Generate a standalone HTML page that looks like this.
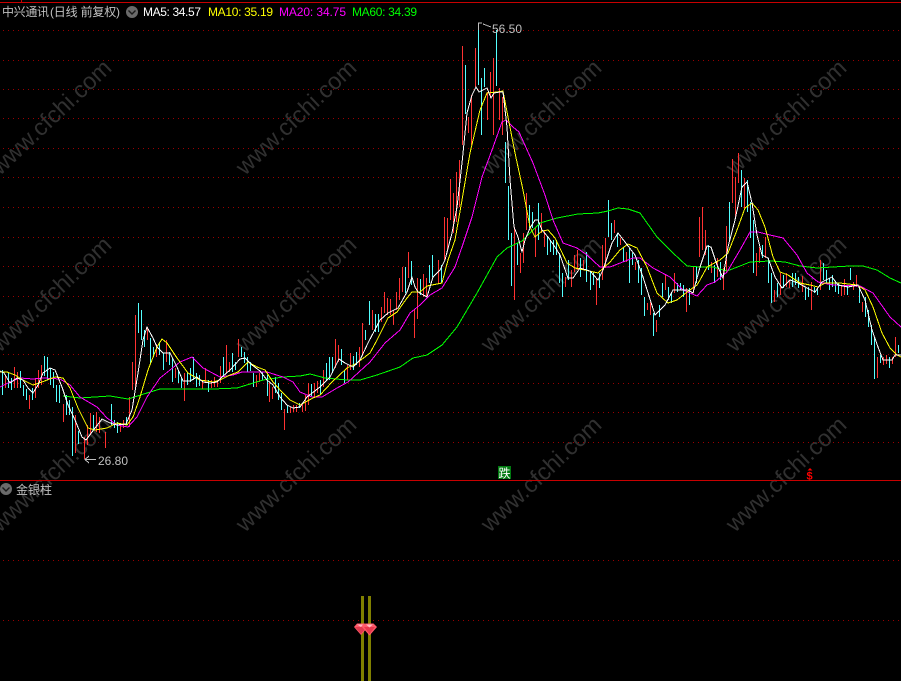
<!DOCTYPE html>
<html lang="zh">
<head>
<meta charset="utf-8">
<title>中兴通讯 日线</title>
<style>
html,body{margin:0;padding:0;background:#000;width:901px;height:681px;overflow:hidden}
svg{display:block}
.wm{font:23.5px "Liberation Sans",sans-serif;fill:#303030;text-anchor:middle}
.t{font-family:"Liberation Sans","WenQuanYi Zen Hei","Noto Sans CJK SC",sans-serif;font-size:12px}
</style>
</head>
<body>
<svg width="901" height="681" viewBox="0 0 901 681" xmlns="http://www.w3.org/2000/svg">
<rect width="901" height="681" fill="#000"/>
<g class="wm">
<text x="51" y="125" transform="rotate(-43.3 51 117)">www.cfchi.com</text>
<text x="296" y="125" transform="rotate(-43.3 296 117)">www.cfchi.com</text>
<text x="541" y="125" transform="rotate(-43.3 541 117)">www.cfchi.com</text>
<text x="786" y="125" transform="rotate(-43.3 786 117)">www.cfchi.com</text>
<text x="51" y="302" transform="rotate(-43.3 51 294)">www.cfchi.com</text>
<text x="296" y="302" transform="rotate(-43.3 296 294)">www.cfchi.com</text>
<text x="541" y="302" transform="rotate(-43.3 541 294)">www.cfchi.com</text>
<text x="786" y="302" transform="rotate(-43.3 786 294)">www.cfchi.com</text>
<text x="51" y="482" transform="rotate(-43.3 51 474)">www.cfchi.com</text>
<text x="296" y="482" transform="rotate(-43.3 296 474)">www.cfchi.com</text>
<text x="541" y="482" transform="rotate(-43.3 541 474)">www.cfchi.com</text>
<text x="786" y="482" transform="rotate(-43.3 786 474)">www.cfchi.com</text>
</g>
<g stroke="#9a0000" stroke-width="1" stroke-dasharray="1 4" shape-rendering="crispEdges">
<path d="M3 30.5H901M3 60.5H901M3 89.5H901M3 118.5H901M3 148.5H901M3 177.5H901M3 207.5H901M3 237.5H901M3 266.5H901M3 296.5H901M3 324.5H901M3 354.5H901M3 383.5H901M3 412.5H901M3 442.5H901M3 560.5H901M3 620.5H901"/>
</g>
<g fill="#c80000" shape-rendering="crispEdges">
<rect x="0" y="2" width="901" height="1"/>
<rect x="21" y="0" width="1" height="2"/>
<rect x="0" y="480" width="901" height="1"/>
</g>
<g fill="none" stroke-width="1" shape-rendering="crispEdges" transform="translate(.5 0)">
<path stroke="#ff3232" d="M5 375V388M14 367V388M17 372V388M29 395V409M35 378V398M38 370V388M41 365V385M63 404V422M75 415V453M84 437V459M87 425V445M90 413V435M96 412V432M99 417V433M105 432V448M120 423V432M123 420V428M129 397V427M132 362V390M135 315V387M147 327V340M156 344V357M166 340V362M175 368V378M184 373V401M202 382V389M205 368V383M211 380V388M214 377V387M217 380V387M220 366V383M226 345V373M229 362V372M238 339V357M256 375V387M259 373V382M269 383V402M272 387V399M284 409V430M290 407V413M293 405V412M296 405V412M302 403V412M305 395V411M308 383V405M314 383V397M317 381V393M323 370V387M335 339V368M338 345V362M347 365V380M350 353V370M359 347V367M362 323V355M372 310V330M381 307V322M384 292V313M387 298V315M390 299V315M393 310V325M396 292V310M399 278V300M402 267V292M408 252V278M414 309V338M417 278V319M423 274V297M426 278V297M438 260V283M444 217V260M447 218V250M450 179V220M453 193V233M456 172V222M459 160V207M462 46V145M468 117V133M471 95V145M475 48V87M487 92V120M490 72V98M493 58V135M499 88V120M502 97V135M514 227V300M520 253V273M523 233V263M526 193V230M535 227V257M541 213V233M544 230V247M565 277V287M571 270V287M574 255V272M577 250V270M583 260V270M596 278V305M602 245V280M605 238V268M614 220V233M620 238V245M626 252V262M635 262V270M647 303V310M650 302V315M656 320V332M665 274V290M674 273V293M686 288V312M693 267V293M699 217V257M702 207V250M705 230V255M711 262V273M717 258V277M723 268V290M726 226V273M732 159V203M735 177V217M738 153V183M744 178V208M756 253V276M759 247V263M765 237V258M774 290V302M780 273V295M786 273V287M789 280V288M802 276V292M811 282V310M820 260V290M841 285V296M844 279V295M853 282V290M856 275V287M862 302V312M877 357V378M883 357V365M886 355V364M892 357V364M895 337V357"/>
<path stroke="#54ffff" d="M2 370V395M8 372V388M11 378V390M20 371V388M23 385V396M26 389V400M32 388V400M44 356V376M47 357V380M50 368V385M53 372V388M56 385V402M59 385V403M66 395V415M69 400V415M72 407V456M78 431V444M93 415V430M111 404V425M114 420V428M117 422V433M126 417V425M138 303V333M141 310V340M144 330V347M150 338V363M153 347V357M159 342V355M163 353V370M169 352V365M172 358V382M178 370V383M181 377V388M187 373V385M190 368V382M193 357V380M196 373V387M199 375V386M208 380V392M223 357V377M232 353V372M235 362V370M241 347V357M244 352V363M247 357V372M250 362V371M253 373V387M262 372V380M267 375V396M275 377V393M278 383V400M281 393V410M287 405V413M299 403V408M311 384V396M320 380V395M326 363V380M329 357V380M332 357V373M341 349V365M344 370V383M353 356V370M356 352V365M365 330V340M369 301V325M375 314V332M378 314V332M405 267V293M411 261V285M420 279V295M429 265V283M432 255V277M441 265V283M465 65V114M478 23V85M481 78V135M484 68V87M496 30V86M505 142V183M508 186V240M511 233V286M517 243V265M529 205V228M532 212V228M538 203V240M547 237V255M550 240V252M553 240V255M556 240V255M559 253V283M562 273V297M568 260V280M580 258V277M586 252V282M590 272V290M593 272V285M599 273V288M608 200V237M611 223V240M617 233V247M623 248V262M629 248V283M632 253V265M638 260V283M641 268V295M644 297V316M653 313V336M659 305V317M662 283V297M668 287V300M671 292V303M677 283V292M680 283V290M683 285V297M689 288V305M696 267V283M708 245V270M714 265V283M720 262V280M729 202V240M741 170V207M747 180V212M750 202V238M753 220V273M762 245V258M768 258V283M771 273V303M777 283V297M783 275V288M792 273V287M795 273V285M798 277V288M805 288V300M808 287V297M814 287V293M817 288V295M823 263V280M826 270V283M829 278V290M832 275V287M835 282V292M838 283V294M847 285V295M850 268V280M859 287V303M865 297V317M868 310V327M871 325V345M874 337V379M880 355V363M889 357V368M898 345V353"/>
</g>
<g fill="none" stroke-width="1" stroke-linejoin="round" shape-rendering="crispEdges">
<path stroke="#00ff00" d="M63 396L80 398L110 396L128 399L147 393L160 389L213 389L237 388L263 380L283 377L300 376L310 374L325 378L347 380L360 380L377 375L400 367L413 358L427 355L442 345L457 327L477 293L497 257L507 248L522 241L540 223L557 218L578 214L598 213L608 211L618 208L628 209L640 213L657 237L673 253L687 266L700 267L713 267L727 271L740 266L750 262L770 261L785 262L800 266L817 268L833 267L850 266L863 266L877 270L890 278L901 283"/>
<path stroke="#ff00ff" d="M0 387L10 382L20 378L33 379L43 378L60 379L70 385L80 397L97 407L107 418L117 425L128 427L137 417L147 397L160 378L180 362L192 357L203 368L220 377L233 375L242 372L257 372L267 372L283 377L293 382L300 392L312 397L322 397L337 388L348 382L370 362L385 343L400 330L410 313L420 305L430 295L442 288L455 267L462 247L472 217L482 177L492 150L502 122L506 120L513 127L519 132L533 163L545 195L553 220L563 243L577 248L587 255L600 267L610 267L633 258L640 258L653 268L670 277L683 290L697 296L707 285L715 282L727 272L740 250L750 232L758 232L770 235L783 238L797 255L807 273L818 282L833 285L860 286L873 293L890 317L901 327"/>
<path stroke="#ffff00" d="M0 372L7 372L15 375L23 380L33 385L42 382L55 377L63 378L70 388L78 408L88 428L95 430L107 428L117 423L127 425L133 417L140 397L148 370L157 347L162 339L167 343L177 358L188 373L200 380L213 382L220 380L230 375L238 372L248 362L257 367L265 370L273 382L282 392L290 400L300 405L313 398L320 395L332 382L347 368L357 363L370 353L377 340L388 318L397 312L407 298L412 292L420 292L427 286L442 283L448 260L455 240L462 200L470 153L480 110L487 93L497 92L503 91L508 117L515 153L523 190L530 227L535 237L542 231L548 230L555 238L567 263L575 268L585 270L598 273L610 262L620 250L628 244L637 248L647 267L657 293L668 303L677 300L687 292L697 285L700 280L707 267L720 260L728 253L737 230L745 208L752 203L758 210L765 227L773 257L780 272L788 275L800 283L810 285L818 287L825 283L840 283L857 285L865 290L873 307L882 333L890 348L897 355L901 357"/>
<path stroke="#ffffff" d="M0 371L4 373L10 383L17 378L23 380L28 388L33 393L38 385L43 373L50 368L55 370L62 387L68 405L75 420L82 437L86 440L92 432L102 419L110 423L117 425L126 424L132 410L138 373L143 340L147 327L153 338L157 347L163 353L170 353L177 367L183 381L190 381L197 377L203 382L210 383L217 382L222 377L230 370L240 359L245 358L252 365L260 371L267 380L273 385L280 397L287 405L293 408L300 407L307 397L320 387L330 377L339 359L345 363L353 367L360 360L368 343L380 320L388 313L398 308L407 292L412 277L415 287L418 292L427 297L433 277L440 270L445 260L452 233L457 207L462 163L467 113L472 95L476 87L479 92L487 88L491 98L494 93L500 92L503 92L507 127L510 180L514 227L518 237L522 252L525 240L530 228L535 220L538 220L542 230L548 237L555 247L560 255L568 278L573 278L580 268L590 271L598 280L603 270L612 243L618 233L625 242L635 255L643 277L655 315L665 305L673 290L688 290L693 293L700 267L707 246L711 247L717 265L723 278L728 247L735 220L742 187L747 182L752 203L757 235L762 255L768 258L775 277L782 288L790 280L798 283L807 288L815 292L822 282L832 277L838 285L848 287L858 285L865 300L872 330L878 347L883 360L892 360L895 355L901 355"/>
</g>
<g class="t">
<text x="2" y="16" fill="#c0c0c0" textLength="47">中兴通讯</text>
<text x="50" y="16" fill="#c0c0c0" textLength="70">(日线 前复权)</text>
<text x="143" y="16" fill="#ffffff" textLength="58">MA5: 34.57</text>
<text x="208" y="16" fill="#ffff00" textLength="65">MA10: 35.19</text>
<text x="279" y="16" fill="#ff00ff" textLength="67">MA20: 34.75</text>
<text x="352" y="16" fill="#00ff00" textLength="65">MA60: 34.39</text>
<text x="492" y="33" fill="#c0c0c0" textLength="30">56.50</text>
<text x="98" y="465" fill="#c0c0c0" textLength="30">26.80</text>
<text x="16" y="494" fill="#c0c0c0" textLength="36">金银柱</text>
</g>
<circle cx="132" cy="12" r="6" fill="#6a6a6a"/>
<path d="M128.5 10.5L132 14L135.5 10.5" fill="none" stroke="#1a1a1a" stroke-width="1.4"/>
<circle cx="6" cy="489" r="6" fill="#6a6a6a"/>
<path d="M2.5 487.5L6 491L9.5 487.5" fill="none" stroke="#1a1a1a" stroke-width="1.4"/>
<path d="M478.5 30V23H482M483 24L491 27" fill="none" stroke="#c0c0c0" shape-rendering="crispEdges"/>
<path d="M96 459.5H85M89 456L85 459.5L89 463" fill="none" stroke="#c0c0c0" shape-rendering="crispEdges"/>
<rect x="498" y="466" width="13" height="13" fill="#007a10"/>
<text x="498.5" y="477.5" fill="#ffffff" style="font:12px 'WenQuanYi Zen Hei','Noto Sans CJK SC',sans-serif">跌</text>
<text x="806.5" y="479.5" fill="#ff0000" style="font:bold 11px 'Liberation Sans',sans-serif">$</text>
<path d="M810 468L807.5 470.5H812.5Z" fill="#ff0000"/>
<g fill="#808000" shape-rendering="crispEdges">
<rect x="361" y="596" width="3" height="85"/>
<rect x="368" y="596" width="3" height="85"/>
</g>
<g>
<path d="M354 627L357 623.5H365L368 627L361 635Z" fill="#ff5a6a"/>
<path d="M355 627H367L361 634Z" fill="#e03a4e"/>
<path d="M357 624.5H363L361 627Z" fill="#ffb6bf"/>
<path d="M362 627L365.5 623.5H373.5L377 627L369.5 635.5Z" fill="#ff5a6a"/>
<path d="M364 627H375L369.5 634Z" fill="#e8384c"/>
<path d="M366 624.5H373L369.5 627.5Z" fill="#ffbcc4"/>
</g>
</svg>
</body>
</html>
